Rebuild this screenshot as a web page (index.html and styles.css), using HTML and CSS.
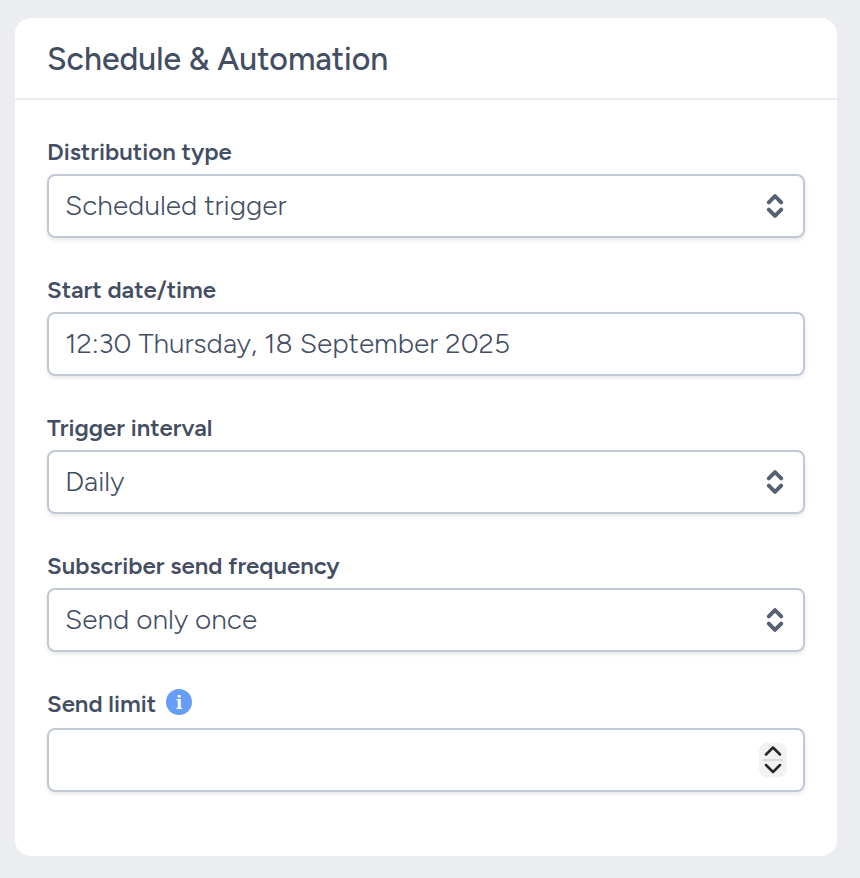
FILE: index.html
```html
<!DOCTYPE html>
<html lang="en">
    <head>
        <title>Schedule &amp; Automation</title>
        <meta charset="UTF-8" />
        <link rel="stylesheet" href="styles.css">
    </head>
    <body>
        <div class="card">
            <div class="card-header">
                <h2>Schedule &amp; Automation</h2>
            </div>
            <form class="card-body">
                <div class="form-group">
                    <label for="distribution-type">Distribution type</label>
                    <div class="control">
                        <select id="distribution-type">
                            <option>Scheduled trigger</option>
                        </select>
                        <svg class="select-icon" viewBox="0 0 20 26">
                            <path d="M3.8 9.3 10 3.1l6.2 6.2M3.8 16.7 10 22.9l6.2-6.2" />
                        </svg>
                    </div>
                </div>
                <div class="form-group">
                    <label for="start-date">Start date/time</label>
                    <div class="control">
                        <input type="text" id="start-date" value="12:30 Thursday, 18 September 2025" />
                    </div>
                </div>
                <div class="form-group">
                    <label for="trigger-interval">Trigger interval</label>
                    <div class="control">
                        <select id="trigger-interval">
                            <option>Daily</option>
                        </select>
                        <svg class="select-icon" viewBox="0 0 20 26">
                            <path d="M3.8 9.3 10 3.1l6.2 6.2M3.8 16.7 10 22.9l6.2-6.2" />
                        </svg>
                    </div>
                </div>
                <div class="form-group">
                    <label for="send-frequency">Subscriber send frequency</label>
                    <div class="control">
                        <select id="send-frequency">
                            <option>Send only once</option>
                        </select>
                        <svg class="select-icon" viewBox="0 0 20 26">
                            <path d="M3.8 9.3 10 3.1l6.2 6.2M3.8 16.7 10 22.9l6.2-6.2" />
                        </svg>
                    </div>
                </div>
                <div class="form-group">
                    <div class="label-row">
                        <label for="send-limit">Send limit</label>
                        <span class="info-badge">i</span>
                    </div>
                    <div class="control">
                        <input type="text" id="send-limit" />
                        <svg class="spinner" viewBox="0 0 28 34">
                            <rect class="spinner-bg" width="28" height="34" rx="8" />
                            <path class="spinner-line" d="M5 17h18" />
                            <path class="spinner-arrow" d="M7 11.5 14 4.5l7 7M7 22l7 7 7-7" />
                        </svg>
                    </div>
                </div>
            </form>
        </div>
    </body>
</html>
```

FILE: styles.css
```css
* {
    box-sizing: border-box;
}
body {
    margin: 0;
    padding: 18px 23px 22px 15px;
    background-color: #ecedf1;
    color: #434e63;
    font-family: Figtree, Lato, sans-serif;
}
.card {
    height: 838px;
    background-color: #ffffff;
    border-radius: 16px;
}
.card-header {
    display: flex;
    align-items: center;
    height: 82px;
    padding: 2px 32px 0;
    border-bottom: 2px solid #ecedf1;
}
h2 {
    margin: 0;
    font-size: 32px;
    line-height: 40px;
    font-weight: 500;
}
.card-body {
    display: flex;
    flex-direction: column;
    gap: 36px;
    padding: 36px 32px;
}
label {
    display: block;
    height: 32px;
    margin-bottom: 6px;
    font-size: 24px;
    line-height: 32px;
    font-weight: 600;
}
.label-row {
    display: flex;
    gap: 10px;
    margin-bottom: 2px;
}
.control {
    display: flex;
    align-items: center;
    height: 64px;
    padding: 0 16px;
    border: 2px solid #c3c8d7;
    border-radius: 8px;
    box-shadow: 0 2px 4px rgba(0, 0, 0, 0.1);
}
select,
input {
    flex: 1;
    min-width: 0;
    height: 40px;
    margin: 0;
    padding: 0 0 2px;
    border: none;
    outline: none;
    appearance: none;
    background: none;
    color: inherit;
    font: 300 28px Figtree, Lato, sans-serif;
}
.select-icon {
    width: 20px;
    height: 26px;
    margin-right: 2px;
    fill: none;
    stroke: #566074;
    stroke-width: 4;
    stroke-linecap: round;
    stroke-linejoin: round;
}
.info-badge {
    width: 26px;
    height: 26px;
    margin-top: 1px;
    border-radius: 50%;
    background-color: #659df8;
    color: #ffffff;
    font: bold 18px/26px "Noto Serif", "DejaVu Serif", serif;
    text-align: center;
}
.spinner {
    width: 28px;
    height: 34px;
    fill: none;
    stroke-linecap: round;
    stroke-linejoin: round;
}
.spinner-bg {
    fill: #f2f2f2;
}
.spinner-line {
    stroke: #dadada;
    stroke-width: 2;
}
.spinner-arrow {
    stroke: #262626;
    stroke-width: 2.5;
}
```
